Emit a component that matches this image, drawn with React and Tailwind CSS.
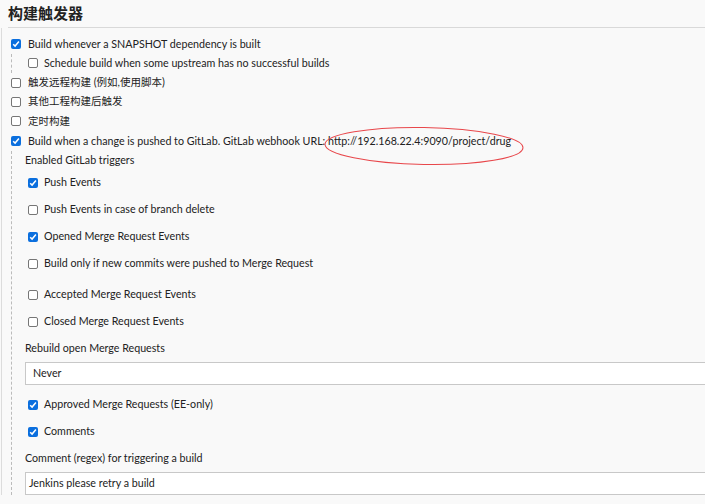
import React from 'react';

const font = { fontFamily: 'Lato, "Noto Sans CJK SC", sans-serif' };

const Box = ({ checked }) =>
  checked ? (
    <span className="flex h-[10px] w-[10px] flex-shrink-0 items-center justify-center rounded-[2px] bg-[#0b6fde]">
      <svg viewBox="0 0 10 10" className="h-[10px] w-[10px]">
        <path d="M2.2 5.2 L4.1 7.1 L7.9 2.6" fill="none" stroke="#fff" strokeWidth="1.5" />
      </svg>
    </span>
  ) : (
    <span className="h-[10px] w-[10px] flex-shrink-0 rounded-[2px] border border-[#767676] bg-white" />
  );

const Check = ({ checked, label, className = 'gap-[6px]' }) => (
  <div className={`flex items-center ${className}`}>
    <Box checked={checked} />
    <span>{label}</span>
  </div>
);

const Cjk = ({ children }) => <span className="text-[10.5px]">{children}</span>;

const triggers = [
  { label: 'Push Events', checked: true },
  { label: 'Push Events in case of branch delete', checked: false },
  { label: 'Opened Merge Request Events', checked: true },
  { label: 'Build only if new commits were pushed to Merge Request', checked: false, extra: true },
  { label: 'Accepted Merge Request Events', checked: false },
  { label: 'Closed Merge Request Events', checked: false },
];

export default function App() {
  return (
    <div
      className="relative h-[504px] w-[705px] overflow-hidden bg-[#f9f9f9] text-[10.7px] text-[#222]"
      style={font}
    >
      {/* Section title */}
      <div className="ml-[8px] flex h-[28px] items-center border-b border-[#d9d9d9] pb-[1px] text-[15px] font-semibold text-[#222]">
        构建触发器
      </div>

      <div className="ml-[1px] border-l border-[#dcdcdc] pt-[6px]">
        <Check checked label="Build whenever a SNAPSHOT dependency is built" className="h-[20px] gap-[7px] pl-[9px]" />
        <div className="ml-[9px] flex h-[19px] items-center border-l border-dashed border-[#bbb] pl-[16px]">
          <Check checked={false} label="Schedule build when some upstream has no successful builds" />
        </div>
        <Check
          checked={false}
          label={
            <>
              <Cjk>触发远程构建</Cjk> (<Cjk>例如,使用脚本</Cjk>)
            </>
          }
          className="h-[19px] gap-[7px] pl-[9px]"
        />
        <Check checked={false} label={<Cjk>其他工程构建后触发</Cjk>} className="h-[19px] gap-[7px] pl-[9px]" />
        <Check checked={false} label={<Cjk>定时构建</Cjk>} className="h-[20px] gap-[7px] pl-[9px]" />
        <Check
          checked
          label="Build when a change is pushed to GitLab. GitLab webhook URL: http://192.168.22.4:9090/project/drug"
          className="h-[20px] gap-[7px] pl-[9px]"
        />

        {/* GitLab options */}
        <div className="ml-[9px] border-l border-dashed border-[#bbb] pl-[13px]">
          <div className="flex h-[18px] items-center">Enabled GitLab triggers</div>
          {triggers.map((t) => (
            <Check
              key={t.label}
              checked={t.checked}
              label={t.label}
              className={`h-[27px] gap-[6px] pl-[3px] ${t.extra ? 'mb-[4px]' : ''}`}
            />
          ))}
          <div className="flex h-[26px] items-center">Rebuild open Merge Requests</div>
          <div className="mt-[1px] flex h-[23px] w-[720px] items-center border border-[#c8c8c8] bg-white pl-[7px]">
            Never
          </div>
          <div className="h-[6px]" />
          <Check checked label="Approved Merge Requests (EE-only)" className="h-[27px] gap-[6px] pl-[3px]" />
          <Check checked label="Comments" className="h-[27px] gap-[6px] pl-[3px]" />
          <div className="flex h-[26px] items-center">Comment (regex) for triggering a build</div>
          <div className="mt-[1px] flex h-[23px] w-[720px] items-center border border-[#c8c8c8] bg-white pl-[3px]">
            Jenkins please retry a build
          </div>
        </div>
      </div>

      {/* red annotation ellipse */}
      <svg className="pointer-events-none absolute left-[318px] top-[122px]" width="212" height="50" viewBox="0 0 212 50">
        <ellipse cx="106" cy="24" rx="99" ry="18.5" fill="none" stroke="#e8474b" strokeWidth="1" transform="rotate(1 106 24)" />
      </svg>
    </div>
  );
}
